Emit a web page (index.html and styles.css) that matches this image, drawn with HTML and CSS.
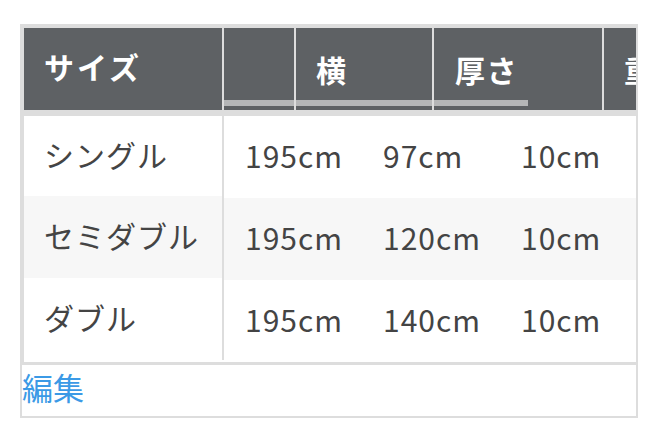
FILE: index.html
```html
<!DOCTYPE html>
<html lang="ja">
<head>
<meta charset="utf-8">
<link rel="stylesheet" href="styles.css">
</head>
<body>
<div class="wrap">
  <div class="scroller">
    <div class="fixed-col">
      <div class="head-cell">サイズ</div>
      <div class="fcell first">シングル</div>
      <div class="fcell alt">セミダブル</div>
      <div class="fcell">ダブル</div>
      <div class="fspacer"></div>
    </div>
    <div class="scroll-col">
      <div class="head-row">
        <div class="bar"></div>
        <div class="hcell w70"></div>
        <div class="hcell sep w136">横</div>
        <div class="hcell sep w168">厚さ</div>
        <div class="hcell sep w120">重</div>
      </div>
      <div class="brow">
        <div class="bcell">195cm</div>
        <div class="bcell">97cm</div>
        <div class="bcell">10cm</div>
      </div>
      <div class="brow alt">
        <div class="bcell">195cm</div>
        <div class="bcell">120cm</div>
        <div class="bcell">10cm</div>
      </div>
      <div class="brow">
        <div class="bcell">195cm</div>
        <div class="bcell">140cm</div>
        <div class="bcell">10cm</div>
      </div>
    </div>
  </div>
  <div class="edit"><a href="#" class="edit-link">編集</a></div>
</div>
</body>
</html>
```

FILE: styles.css
```css
html, body {
  margin: 0;
  padding: 0;
  background: #ffffff;
}
body {
  padding: 24px 0 0 20px;
  font-family: "Noto Sans CJK JP", "Noto Sans", sans-serif;
}
.wrap {
  box-sizing: border-box;
  width: 618px;
  border: 2px solid #dddddd;
}
.scroller {
  display: flex;
  overflow: hidden;
  border-left: 2px solid #dddddd;
  border-top: 2px solid #dddddd;
  border-bottom: 3px solid #dddddd;
}
.fixed-col {
  flex: 0 0 200px;
  display: flex;
  flex-direction: column;
}
.head-cell {
  box-sizing: border-box;
  height: 88px;
  background: #5e6164;
  color: #ffffff;
  font-weight: 700;
  font-size: 30px;
  letter-spacing: 3px;
  padding-left: 20px;
  padding-bottom: 7px;
  display: flex;
  align-items: center;
  border-right: 2px solid #dddddd;
  border-bottom: 6px solid #dddddd;
}
.fcell {
  height: 82px;
  box-sizing: border-box;
  border-right: 2px solid #dddddd;
  padding-left: 20px;
  padding-bottom: 5px;
  display: flex;
  align-items: center;
  font-size: 30px;
  letter-spacing: 1px;
  color: #444444;
  background: #ffffff;
}
.fcell.first {
  height: 80px;
}
.fcell.alt {
  background: #f7f7f7;
}
.fspacer {
  height: 2px;
}
.scroll-col {
  flex: 1 1 auto;
  min-width: 0;
  overflow: hidden;
}
.head-row {
  position: relative;
  display: flex;
  height: 82px;
  background: #5e6164;
  border-bottom: 6px solid #dddddd;
  white-space: nowrap;
}
.bar {
  position: absolute;
  left: 0;
  top: 72px;
  width: 304px;
  height: 6px;
  background: #b5b6b7;
}
.hcell {
  position: relative;
  flex: 0 0 auto;
  box-sizing: border-box;
  display: flex;
  align-items: center;
  padding-left: 20px;
  padding-bottom: 1px;
  color: #ffffff;
  font-weight: 700;
  font-size: 30px;
  letter-spacing: 1.5px;
}
.hcell.sep {
  border-left: 2px solid #dddddd;
}
.w70 { width: 70px; }
.w136 { width: 138px; }
.w168 { width: 170px; padding-left: 21px; }
.w120 { width: 34px; overflow: hidden; }
.brow {
  display: flex;
  height: 82px;
  white-space: nowrap;
  background: #ffffff;
}
.brow.alt {
  background: #f7f7f7;
}
.bcell {
  flex: 0 0 138px;
  box-sizing: border-box;
  padding-left: 21px;
  padding-bottom: 5px;
  display: flex;
  align-items: center;
  font-size: 30px;
  letter-spacing: 1px;
  color: #444444;
}
.edit {
  height: 51px;
}
.edit-link {
  display: block;
  width: max-content;
  font-size: 31px;
  line-height: 44px;
  color: #3b9ae6;
  text-decoration: none;
}
```
